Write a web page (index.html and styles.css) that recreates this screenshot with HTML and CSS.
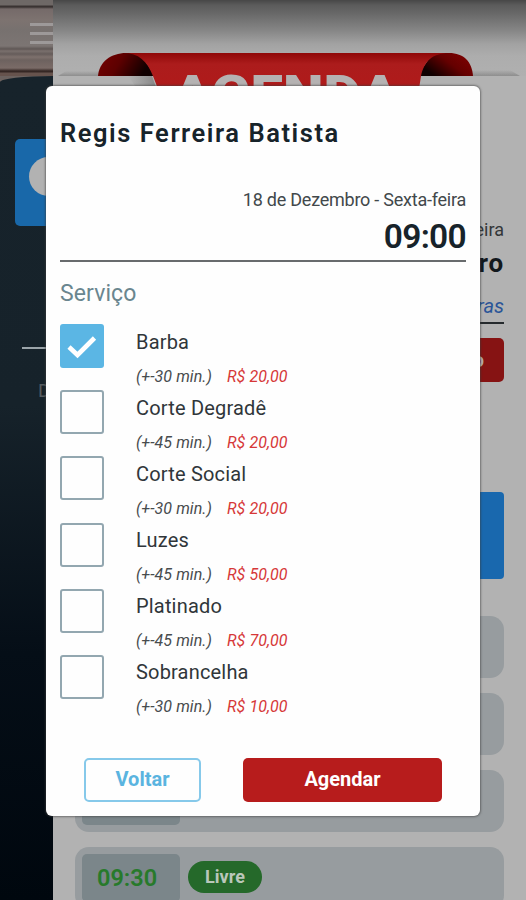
FILE: index.html
```html
<!DOCTYPE html>
<html lang="pt-BR">
<head>
<meta charset="utf-8">
<title>Agenda</title>
<link rel="stylesheet" href="styles.css">
</head>
<body>
<div class="app">
  <aside class="side">
    <div class="wood">
      <div class="menu"><i></i><i></i><i></i></div>
    </div>
    <div class="side-body">
      <div class="profile"><div class="avatar"></div></div>
      <div class="side-line"></div>
      <div class="side-text">D</div>
    </div>
  </aside>
  <main class="main">
    <header class="header">
      <svg class="ribbon" width="473" height="120" viewBox="53 0 473 120">
        <defs>
          <linearGradient id="curlL" x1="0" y1="0" x2="1" y2="0.25"><stop offset="0" stop-color="#760000"/><stop offset=".45" stop-color="#5d0000"/><stop offset=".95" stop-color="#100000"/></linearGradient>
          <linearGradient id="curlR" x1="1" y1="0" x2="0" y2="0.55"><stop offset="0" stop-color="#850202"/><stop offset=".5" stop-color="#650000"/><stop offset=".95" stop-color="#100000"/></linearGradient>
          <linearGradient id="band" gradientUnits="userSpaceOnUse" x1="0" y1="53" x2="0" y2="90"><stop offset="0" stop-color="#900808"/><stop offset=".3" stop-color="#ac1c1c"/><stop offset="1" stop-color="#b01a1a"/></linearGradient>
          <linearGradient id="shade" x1="0" y1="0" x2="0" y2="1"><stop offset="0" stop-color="#777" stop-opacity="0"/><stop offset="1" stop-color="#777" stop-opacity=".6"/></linearGradient>
          <linearGradient id="fold" x1="0" y1="0" x2="1" y2="0"><stop offset="0" stop-color="#777" stop-opacity="0"/><stop offset="1" stop-color="#666" stop-opacity=".6"/></linearGradient>
        </defs>
        <path d="M58 76L66 71H100V76Z" fill="url(#shade)"/>
        <path d="M472 70H510L520 76H472Z" fill="url(#shade)"/>
        <path d="M53 76H526V120H53Z" fill="#b2b2b2"/>
        <path d="M128 76H152L157 90H138Z" fill="url(#fold)"/>
        <path d="M98 76C99 62 111 53 126 53H140L155 76Z" fill="url(#curlL)"/>
        <path d="M473 76C472 62 464 53 449 53H433L417 76Z" fill="url(#curlR)"/>
        <path d="M123 53H449C432 53 424 62 421 76L415 115H168L153 76C147 61 139 53 123 53Z" fill="url(#band)"/>
        <text x="286" y="112" text-anchor="middle" textLength="227" lengthAdjust="spacingAndGlyphs" class="ribbon-text">AGENDA</text>
      </svg>
    </header>
    <section class="summary">
      <div class="sum-day">eira</div>
      <div class="sum-month">ro</div>
      <div class="sum-link">ras</div>
      <div class="sum-btn">o</div>
      <div class="sum-card"></div>
    </section>
    <section class="slots">
      <div class="slot"></div>
      <div class="slot"></div>
      <div class="slot"><div class="slot-time"></div></div>
      <div class="slot"><div class="slot-time">09:30</div><div class="badge">Livre</div></div>
    </section>
  </main>

  <div class="modal">
    <h1 class="name">Regis Ferreira Batista</h1>
    <div class="date">18 de Dezembro - Sexta-feira</div>
    <div class="time">09:00</div>
    <div class="label">Serviço</div>
    <div class="services">
      <div class="service">
        <div class="box checked"><svg width="44" height="44" viewBox="0 0 44 44"><path d="M9 23L17.5 31L34.5 14" fill="none" stroke="#fff" stroke-width="4.6"/></svg></div>
        <div class="info"><div class="title">Barba</div><div class="meta"><span class="dur">(+-30 min.)</span><span class="price">R$ 20,00</span></div></div>
      </div>
      <div class="service"><div class="box"></div><div class="info"><div class="title">Corte Degradê</div><div class="meta"><span class="dur">(+-45 min.)</span><span class="price">R$ 20,00</span></div></div></div>
      <div class="service"><div class="box"></div><div class="info"><div class="title">Corte Social</div><div class="meta"><span class="dur">(+-30 min.)</span><span class="price">R$ 20,00</span></div></div></div>
      <div class="service"><div class="box"></div><div class="info"><div class="title">Luzes</div><div class="meta"><span class="dur">(+-45 min.)</span><span class="price">R$ 50,00</span></div></div></div>
      <div class="service"><div class="box"></div><div class="info"><div class="title">Platinado</div><div class="meta"><span class="dur">(+-45 min.)</span><span class="price">R$ 70,00</span></div></div></div>
      <div class="service"><div class="box"></div><div class="info"><div class="title">Sobrancelha</div><div class="meta"><span class="dur">(+-30 min.)</span><span class="price">R$ 10,00</span></div></div></div>
    </div>
    <div class="actions">
      <div class="btn back">Voltar</div>
      <div class="btn book">Agendar</div>
    </div>
  </div>
</div>
</body>
</html>
```
FILE: styles.css
```css
* { box-sizing: border-box; }
body { margin: 0; font-family: Roboto, "Liberation Sans", sans-serif; color: #263238; }
.app { position: relative; width: 526px; height: 900px; overflow: hidden; display: grid; grid-template-columns: 53px 473px; background: #b2b2b2; }

.side { height: 900px; overflow: hidden; background: #6c625f; }
.wood {
  height: 76px; padding: 23px 0 0 30px;
  background:
    linear-gradient(180deg, #6e6866 0 5px, #3a3332 6px 7px, #756a69 9px, #7d7370 20px, #77716f 30px, #7c7573 46px, #5f5755 49px, #7a706d 51px, #655c5a 54px, #7e716d 57px, #6d625f 60px, #7a6b67 68px, #352724 71px 72px, #66534d 73px);
}
.menu { display: flex; flex-direction: column; gap: 6px; }
.menu i { height: 3px; background: #9d9999; }
.side-body { height: 824px; padding: 63px 0 0 15px; border-top-left-radius: 53px 6px; background: linear-gradient(180deg, #17232b 0, #16222a 40%, #050e17 70%, #00070e 100%); }
.profile { height: 87px; border-radius: 5px 0 0 5px; background: #1968a9; padding: 18px 0 0 14px; }
.avatar { width: 39px; height: 39px; border-radius: 50%; background: #b2b2b2; }
.side-line { height: 2px; margin: 121px 0 0 7px; background: #9ba4a9; }
.side-text { margin: 31px 0 0 23px; font-size: 19px; line-height: 22px; color: #555c60; }

.main { height: 900px; overflow: hidden; }
.header { height: 76px; background: linear-gradient(180deg, #474747 0, #5b5b5b 5px, #696969 14px, #858585 30px, #a2a2a2 44px, #adadad 56px, #b0b0b0 76px); }
.ribbon { display: block; }
.ribbon-text { font: 900 52px Roboto, sans-serif; fill: #b5b2b2; }
.summary { height: 540px; padding: 141px 22px 0 0; display: flex; flex-direction: column; align-items: flex-end; }
.sum-day { font-size: 18px; line-height: 26px; color: #333638; }
.sum-month { font-size: 26px; line-height: 32px; font-weight: 700; margin-top: 4px; color: #12181c; letter-spacing: .8px; }
.sum-link { width: 60px; text-align: right; font-size: 20px; line-height: 28px; height: 45px; padding-top: 13px; font-style: italic; color: #2a5598; border-bottom: 2px solid #252a2d; }
.sum-btn { width: 100px; height: 44px; margin-top: 14px; padding-right: 20px; border-radius: 5px; background: #861313; color: #b8adad; font-size: 20px; line-height: 44px; font-weight: 700; text-align: right; }
.sum-card { width: 429px; height: 87px; margin-top: 110px; border-radius: 4px; background: #1968ae; }
.slots { padding: 0 22px; display: flex; flex-direction: column; gap: 15px; }
.slot { height: 62px; flex: none; border-radius: 14px; background: #979c9f; padding: 7px; display: flex; gap: 8px; }
.slot-time { width: 98px; height: 48px; border-radius: 5px; background: #7b868a; color: #277a2b; font-size: 23.5px; line-height: 48px; font-weight: 600; padding-left: 15px; }
.badge { width: 74px; height: 32px; margin-top: 7px; border-radius: 16px; background: #25692a; color: #bac7ba; font-size: 18px; line-height: 32px; font-weight: 700; text-align: center; }

.modal { position: absolute; left: 46px; top: 86px; width: 434px; height: 730px; padding: 0 14px; border-radius: 6px; background: #fefefe; box-shadow: 0 0 2px 1px rgba(60,60,60,.55); }
.name { margin: 30px 0 0; height: 34px; font-size: 25.5px; line-height: 34px; font-weight: 600; letter-spacing: 1.55px; white-space: nowrap; color: #17232a; }
.date { margin-top: 37px; text-align: right; font-size: 18px; line-height: 26px; letter-spacing: -.24px; color: #42484b; }
.time { height: 49px; text-align: right; font-size: 33.5px; line-height: 48px; font-weight: 600; letter-spacing: -.7px; color: #17232a; border-bottom: 2px solid #686b6d; }
.label { margin-top: 16px; font-size: 23px; line-height: 32px; letter-spacing: .1px; color: #6a868f; }
.services { margin-top: 14px; }
.service { height: 66.2px; display: flex; gap: 32px; }
.box { flex: none; width: 44px; height: 44px; border: 2px solid #93a7b0; border-radius: 3px; }
.box.checked { border: 0; background: #5bb6e4; }
.box svg { display: block; }
.info { padding-top: 3.5px; white-space: nowrap; }
.title { font-size: 20px; line-height: 28px; letter-spacing: .18px; color: #30363a; }
.meta { margin-top: 10px; display: flex; font-size: 16px; line-height: 22px; font-style: italic; letter-spacing: .06px; color: #484c4e; }
.dur { width: 91px; }
.price { color: #d63838; }
.actions { margin: 37px 0 0 24px; display: flex; gap: 42px; }
.btn { height: 44px; border-radius: 5px; font-size: 20px; line-height: 43px; font-weight: 700; text-align: center; }
.back { width: 117px; border: 2px solid #86c9ea; line-height: 39px; color: #5ab4e0; }
.book { width: 199px; background: #b71c1c; color: #fff; }
```
